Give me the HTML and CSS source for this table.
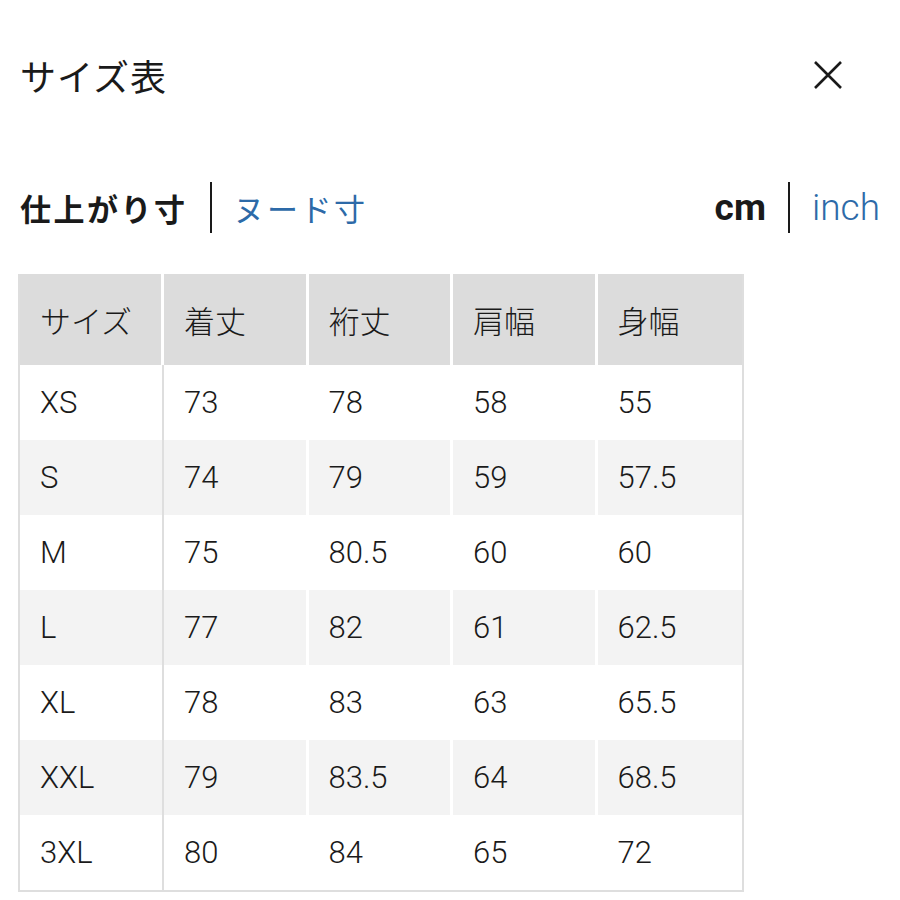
FILE: index.html
```html
<!DOCTYPE html>
<html lang="ja">
<head>
<meta charset="utf-8">
<link rel="stylesheet" href="styles.css">
</head>
<body>
<div class="page">
  <header class="top">
    <h1 class="title">サイズ表</h1>
    <button class="close" aria-label="閉じる">
      <svg width="30" height="30" viewBox="0 0 30 30"><path d="M2 2 L28 28 M28 2 L2 28" stroke="#1a1a1a" stroke-width="2.6" fill="none"/></svg>
    </button>
  </header>
  <div class="tabs">
    <div class="group">
      <span class="active">仕上がり寸</span>
      <span class="bar"></span>
      <span class="link">ヌード寸</span>
    </div>
    <div class="group units">
      <span class="active">cm</span>
      <span class="bar"></span>
      <span class="link">inch</span>
    </div>
  </div>
  <table class="sizes">
    <thead>
      <tr><th>サイズ</th><th>着丈</th><th>裄丈</th><th>肩幅</th><th>身幅</th></tr>
    </thead>
    <tbody>
      <tr><td>XS</td><td>73</td><td>78</td><td>58</td><td>55</td></tr>
      <tr><td>S</td><td>74</td><td>79</td><td>59</td><td>57.5</td></tr>
      <tr><td>M</td><td>75</td><td>80.5</td><td>60</td><td>60</td></tr>
      <tr><td>L</td><td>77</td><td>82</td><td>61</td><td>62.5</td></tr>
      <tr><td>XL</td><td>78</td><td>83</td><td>63</td><td>65.5</td></tr>
      <tr><td>XXL</td><td>79</td><td>83.5</td><td>64</td><td>68.5</td></tr>
      <tr><td>3XL</td><td>80</td><td>84</td><td>65</td><td>72</td></tr>
    </tbody>
  </table>
</div>
</body>
</html>
```

FILE: styles.css
```css
html, body {
  margin: 0;
  padding: 0;
  background: #fff;
}
body {
  font-family: Roboto, "Noto Sans CJK JP", sans-serif;
  color: #1a1a1a;
}
.page {
  padding: 0 20px 0 18px;
}
.top {
  display: flex;
  justify-content: space-between;
  align-items: center;
  height: 150px;
  padding-left: 2px;
  padding-right: 37px;
}
.title {
  margin: 0;
  font-family: "Noto Sans CJK JP", sans-serif;
  font-weight: 400;
  font-size: 36px;
  letter-spacing: 1px;
  line-height: 1;
}
.close {
  border: 0;
  background: none;
  padding: 0;
  width: 30px;
  height: 30px;
  display: block;
}
.close svg { display: block; }
.tabs {
  display: flex;
  justify-content: space-between;
  align-items: center;
  height: 124px;
  padding-left: 2px;
  padding-bottom: 9px;
  box-sizing: border-box;
}
.group {
  display: flex;
  align-items: center;
  gap: 22px;
  font-family: "Noto Sans CJK JP", sans-serif;
  font-size: 31px;
  letter-spacing: 2.5px;
  line-height: 1;
}
.group .active { font-weight: 700; }
.group .link { color: #2d6aa8; }
.bar {
  width: 2px;
  height: 51px;
  background: #1a1a1a;
}
.units {
  font-family: Roboto, sans-serif;
  font-size: 37px;
  letter-spacing: 0;
  gap: 22px;
}
.units .link { font-weight: 300; }
.sizes {
  border-collapse: separate;
  border-spacing: 0;
  width: 726px;
  font-size: 31px;
  font-weight: 300;
  border: 2px solid #dedede;
  border-top: 0;
  table-layout: fixed;
}
.sizes th, .sizes td {
  text-align: left;
  padding: 0 0 0 20px;
  border-right: 3px solid #fff;
  line-height: 1;
}
.sizes th:last-child, .sizes td:last-child { border-right: 0; }
.sizes th {
  font-family: "Noto Sans CJK JP", sans-serif;
  font-weight: 300;
  background: #dcdcdc;
  height: 91px;
}
.sizes th:first-child { width: 121px; }
.sizes td { height: 75px; }
.sizes td:first-child { border-right: 2px solid #dedede; }
.sizes tbody tr:nth-child(even) td { background: #f3f3f3; }
```
